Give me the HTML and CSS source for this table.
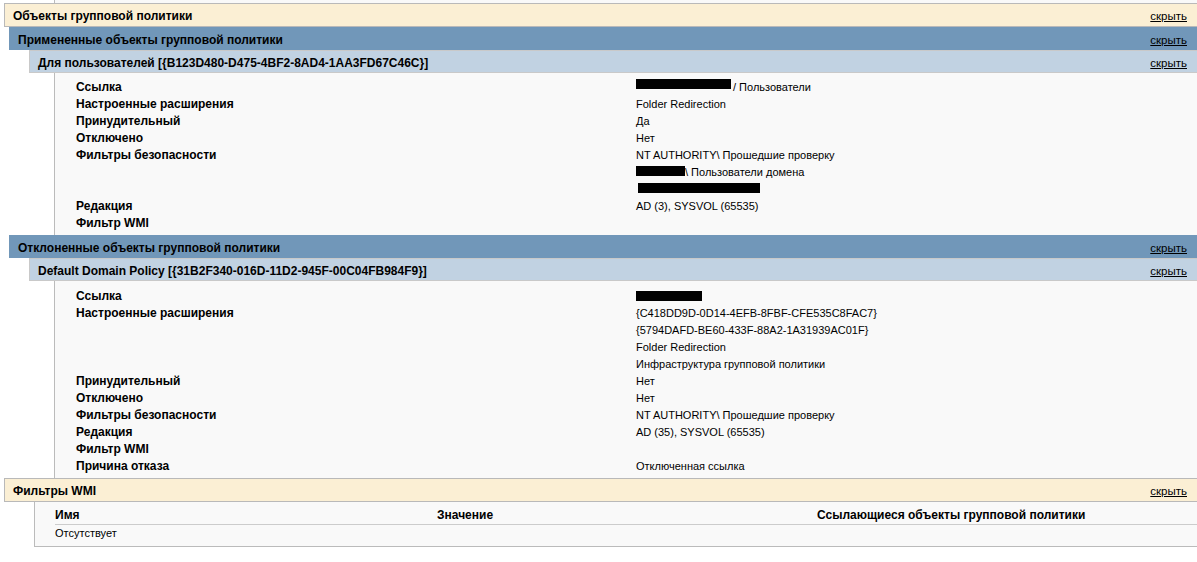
FILE: index.html
```html
<!DOCTYPE html>
<html lang="ru">
<head>
<meta charset="utf-8">
<title>Результаты групповой политики</title>
<link rel="stylesheet" href="styles.css">
</head>
<body>
<div class="report">
  <div class="stub"></div>

  <div class="bar he0"><span>Объекты групповой политики</span><a class="hide">скрыть</a></div>
  <div class="bar he1"><span>Примененные объекты групповой политики</span><a class="hide">скрыть</a></div>
  <div class="bar he2"><span>Для пользователей [{B123D480-D475-4BF2-8AD4-1AA3FD67C46C}]</span><a class="hide">скрыть</a></div>
  <div class="info first">
    <div class="prop"><div class="lbl">Ссылка</div><div class="vals"><div class="v"><span class="redact w94 up2"></span>/ Пользователи</div></div></div>
    <div class="prop"><div class="lbl">Настроенные расширения</div><div class="vals"><div class="v">Folder Redirection</div></div></div>
    <div class="prop"><div class="lbl">Принудительный</div><div class="vals"><div class="v">Да</div></div></div>
    <div class="prop"><div class="lbl">Отключено</div><div class="vals"><div class="v">Нет</div></div></div>
    <div class="prop"><div class="lbl">Фильтры безопасности</div><div class="vals">
      <div class="v">NT AUTHORITY\ Прошедшие проверку</div>
      <div class="v"><span class="redact w49"></span>\ Пользователи домена</div>
      <div class="v"><span class="redact w122 ml2"></span></div>
    </div></div>
    <div class="prop"><div class="lbl">Редакция</div><div class="vals"><div class="v">AD (3), SYSVOL (65535)</div></div></div>
    <div class="prop"><div class="lbl">Фильтр WMI</div><div class="vals"><div class="v"></div></div></div>
  </div>

  <div class="bar he1"><span>Отклоненные объекты групповой политики</span><a class="hide">скрыть</a></div>
  <div class="bar he2"><span>Default Domain Policy [{31B2F340-016D-11D2-945F-00C04FB984F9}]</span><a class="hide">скрыть</a></div>
  <div class="info second">
    <div class="prop"><div class="lbl">Ссылка</div><div class="vals"><div class="v"><span class="redact w66 dn1"></span></div></div></div>
    <div class="prop"><div class="lbl">Настроенные расширения</div><div class="vals">
      <div class="v">{C418DD9D-0D14-4EFB-8FBF-CFE535C8FAC7}</div>
      <div class="v">{5794DAFD-BE60-433F-88A2-1A31939AC01F}</div>
      <div class="v">Folder Redirection</div>
      <div class="v">Инфраструктура групповой политики</div>
    </div></div>
    <div class="prop"><div class="lbl">Принудительный</div><div class="vals"><div class="v">Нет</div></div></div>
    <div class="prop"><div class="lbl">Отключено</div><div class="vals"><div class="v">Нет</div></div></div>
    <div class="prop"><div class="lbl">Фильтры безопасности</div><div class="vals"><div class="v">NT AUTHORITY\ Прошедшие проверку</div></div></div>
    <div class="prop"><div class="lbl">Редакция</div><div class="vals"><div class="v">AD (35), SYSVOL (65535)</div></div></div>
    <div class="prop"><div class="lbl">Фильтр WMI</div><div class="vals"><div class="v"></div></div></div>
    <div class="prop"><div class="lbl">Причина отказа</div><div class="vals"><div class="v">Отключенная ссылка</div></div></div>
  </div>

  <div class="bar he0"><span>Фильтры WMI</span><a class="hide">скрыть</a></div>
  <div class="info wmi">
    <table class="wmitable">
      <thead>
        <tr><th>Имя</th><th>Значение</th><th>Ссылающиеся объекты групповой политики</th></tr>
      </thead>
      <tbody>
        <tr><td>Отсутствует</td><td></td><td></td></tr>
      </tbody>
    </table>
  </div>
</div>
</body>
</html>
```

FILE: styles.css
```css
html, body {
  margin: 0;
  padding: 0;
  background: #ffffff;
}

body {
  font-family: "Liberation Sans", Arial, sans-serif;
  color: #000000;
  width: 1197px;
  overflow: hidden;
}

.report {
  display: flex;
  flex-direction: column;
}

.stub {
  height: 3px;
  margin-left: 54px;
  border-left: 1px solid #bbbbbb;
  background: #f9f9f9;
}

.bar {
  display: flex;
  align-items: center;
  justify-content: space-between;
  box-sizing: border-box;
  height: 23px;
  border: 1px solid #b9b9b9;
  border-right: none;
  padding: 2px 10px 0 8px;
  font-size: 12px;
  font-weight: bold;
  color: #000000;
}

.he0 {
  height: 24px;
  margin-left: 4px;
  background: #fbefd4;
}

.he1 {
  margin-left: 9px;
  background: #7197b9;
  border-color: #7197b9;
}

.he2 {
  margin-left: 29px;
  background: #c1d2e2;
  border-color: #c9c9c9;
}

.hide {
  font-size: 11.5px;
  font-weight: normal;
  text-decoration: underline;
  color: #000000;
  cursor: pointer;
}

.info {
  margin-left: 54px;
  border-left: 1px solid #bbbbbb;
  background: #f9f9f9;
  display: flex;
  flex-direction: column;
  padding-left: 21px;
}

.info.first {
  padding-top: 6px;
  padding-bottom: 3px;
}

.info.second {
  padding-top: 7px;
  padding-bottom: 3px;
}

.prop {
  display: flex;
}

.lbl {
  width: 560px;
  flex: none;
  font-size: 12px;
  font-weight: bold;
  line-height: 17px;
  height: 17px;
}

.vals {
  display: flex;
  flex-direction: column;
}

.v {
  font-size: 11px;
  line-height: 17px;
  height: 17px;
  white-space: nowrap;
}

.redact {
  display: inline-block;
  background: #000000;
  height: 10px;
  vertical-align: 0;
}

.w94 { width: 95px; margin-right: 2px; }
.w49 { width: 49px; }
.w122 { width: 122px; }
.w66 { width: 66px; }
.ml2 { margin-left: 2px; }
.up2 { vertical-align: 2px; }
.dn1 { vertical-align: -1px; }

.info.wmi {
  margin-left: 34px;
  border-bottom: 1px solid #bbbbbb;
  padding: 4px 0 4px 20px;
}

.wmitable {
  border-collapse: collapse;
  width: 1142px;
}

.wmitable th,
.wmitable td {
  text-align: left;
  padding: 0;
  height: 17px;
  line-height: 17px;
  vertical-align: middle;
}

.wmitable th {
  font-size: 12px;
  font-weight: bold;
  border-bottom: 1px solid #cccccc;
  width: 382px;
  padding-top: 1px;
}

.wmitable th + th {
  width: 380px;
}

.wmitable td {
  font-size: 11px;
}
```
